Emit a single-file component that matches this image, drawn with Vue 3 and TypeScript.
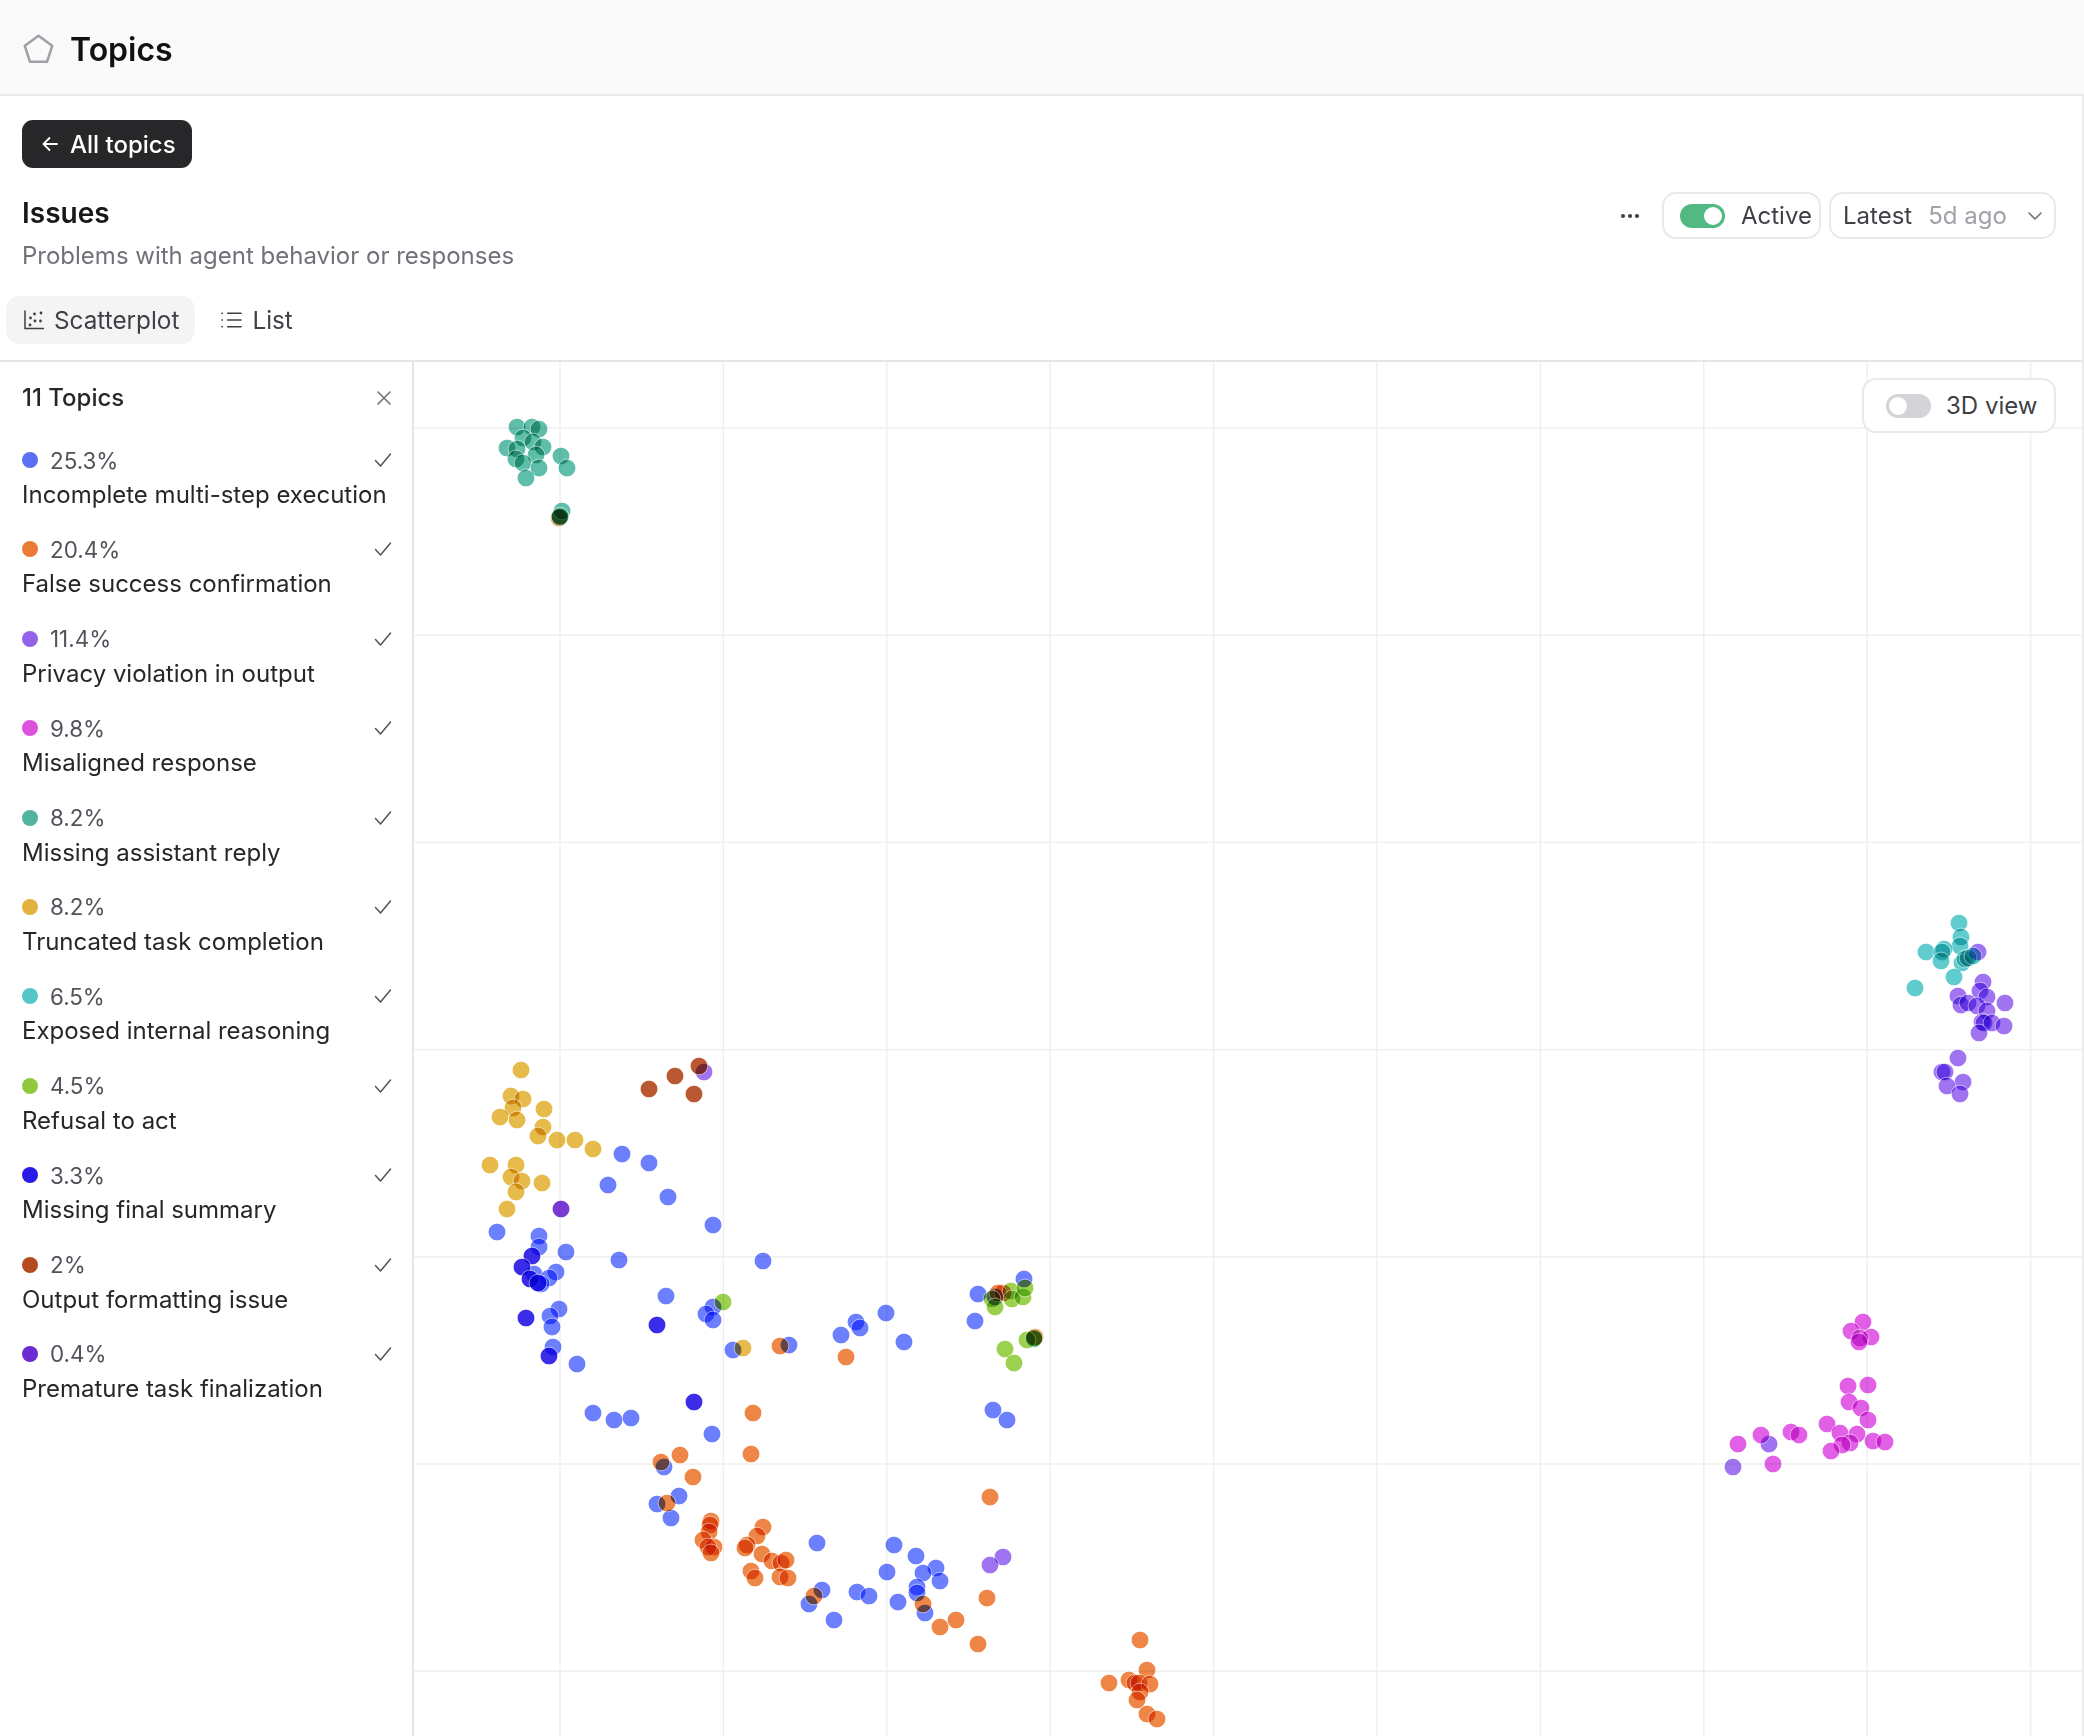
<script setup lang="ts">
type Point = [number, number]

const topics = [
  { pct: '25.3%', name: 'Incomplete multi-step execution', color: '#5a70f2' },
  { pct: '20.4%', name: 'False success confirmation', color: '#ea7a35' },
  { pct: '11.4%', name: 'Privacy violation in output', color: '#9263e8' },
  { pct: '9.8%', name: 'Misaligned response', color: '#dc50e0' },
  { pct: '8.2%', name: 'Missing assistant reply', color: '#52b3a0' },
  { pct: '8.2%', name: 'Truncated task completion', color: '#e2b23e' },
  { pct: '6.5%', name: 'Exposed internal reasoning', color: '#55c5c8' },
  { pct: '4.5%', name: 'Refusal to act', color: '#90c840' },
  { pct: '3.3%', name: 'Missing final summary', color: '#2a1ae6' },
  { pct: '2%', name: 'Output formatting issue', color: '#b44a20' },
  { pct: '0.4%', name: 'Premature task finalization', color: '#6c2bd0' },
]

// page coordinates, the svg viewBox starts at the chart's corner
const series: { color: string; dots: Point[] }[] = [
  {
    color: '#5f74fc',
    dots: [
      [622, 1154], [649, 1163], [608, 1185], [668, 1197], [713, 1225], [497, 1232], [539, 1236], [539, 1247],
      [566, 1252], [619, 1260], [763, 1261], [534, 1274], [556, 1272], [549, 1278], [541, 1284], [559, 1309],
      [550, 1316], [552, 1327], [553, 1347], [577, 1364], [666, 1296], [713, 1307], [706, 1314], [713, 1320],
      [733, 1350], [789, 1345], [841, 1335], [856, 1322], [860, 1328], [886, 1313], [904, 1342], [978, 1294],
      [975, 1321], [995, 1297], [1024, 1279], [993, 1410], [1007, 1420], [593, 1413], [614, 1420], [631, 1418],
      [712, 1434], [664, 1467], [657, 1504], [679, 1496], [671, 1518], [817, 1543], [894, 1545], [916, 1556],
      [936, 1568], [887, 1572], [923, 1573], [940, 1581], [917, 1587], [917, 1593], [898, 1602], [925, 1613],
      [822, 1590], [809, 1604], [857, 1592], [869, 1596], [834, 1620],
    ],
  },
  {
    color: '#ec7c36',
    dots: [
      [780, 1346], [1003, 1293], [998, 1293], [846, 1357], [753, 1413], [751, 1454], [680, 1455], [661, 1462],
      [693, 1477], [990, 1497], [987, 1598], [956, 1620], [940, 1627], [978, 1644], [1140, 1640], [1147, 1670],
      [1109, 1683], [1129, 1680], [1135, 1683], [1139, 1683], [1150, 1684], [1140, 1692], [1137, 1700],
      [1147, 1714], [1157, 1719], [667, 1503], [711, 1521], [710, 1525], [709, 1532],
      [703, 1540], [714, 1547], [708, 1547], [711, 1553], [763, 1527], [757, 1536], [747, 1545],
      [745, 1548], [762, 1554], [772, 1561], [781, 1563], [786, 1560], [751, 1571], [755, 1578], [780, 1577],
      [788, 1578], [814, 1596], [923, 1604], [559, 518], [1035, 1337],
    ],
  },
  {
    color: '#9868f0',
    dots: [
      [704, 1072], [1003, 1557], [990, 1565], [1769, 1444], [1733, 1467], [1978, 952], [1983, 982], [1980, 991],
      [1987, 997], [1958, 996], [1961, 1005], [1968, 1003], [1977, 1006], [1987, 1011], [2005, 1003], [1982, 1022],
      [1984, 1023], [1992, 1023], [2004, 1026], [1979, 1033], [1958, 1058], [1942, 1072], [1945, 1072], [1963, 1082],
      [1947, 1086], [1960, 1094],
    ],
  },
  {
    color: '#de52e3',
    dots: [
      [1863, 1322], [1851, 1331], [1871, 1337], [1860, 1338], [1859, 1342], [1848, 1386], [1868, 1385], [1849, 1402],
      [1861, 1408], [1868, 1420], [1827, 1424], [1840, 1433], [1857, 1434], [1850, 1443], [1842, 1445], [1831, 1451],
      [1873, 1441], [1885, 1442], [1791, 1432], [1799, 1435], [1761, 1435], [1738, 1444], [1773, 1464],
    ],
  },
  {
    color: '#50b9a2',
    dots: [
      [517, 427], [532, 427], [539, 429], [523, 438], [533, 442], [543, 447], [507, 448], [517, 449],
      [536, 455], [516, 459], [523, 463], [539, 468], [526, 478], [561, 456], [567, 468], [562, 511], [560, 516],
      [560, 517], [1034, 1339],
    ],
  },
  {
    color: '#e4b43c',
    dots: [
      [521, 1070], [511, 1096], [523, 1099], [513, 1108], [500, 1117], [517, 1120], [544, 1109], [543, 1127],
      [538, 1136], [557, 1140], [575, 1140], [593, 1149], [490, 1165], [516, 1165], [511, 1177], [522, 1181],
      [542, 1183], [516, 1192], [507, 1209], [743, 1348],
    ],
  },
  {
    color: '#52c8ca',
    dots: [
      [1959, 923], [1961, 937], [1960, 946], [1926, 952], [1944, 949], [1942, 952], [1941, 961], [1962, 963],
      [1965, 959], [1968, 958], [1973, 956], [1954, 977], [1915, 988],
    ],
  },
  {
    color: '#93cd40',
    dots: [
      [723, 1302], [992, 1299], [995, 1307], [1011, 1291], [1012, 1299], [1023, 1297], [1025, 1288], [1027, 1340],
      [1005, 1349], [1014, 1363], [1034, 1338],
    ],
  },
  {
    color: '#2a1ae6',
    dots: [[532, 1256], [522, 1267], [530, 1279], [538, 1283], [526, 1318], [657, 1325], [549, 1356], [694, 1402]],
  },
  { color: '#b44a20', dots: [[649, 1089], [675, 1076], [699, 1066], [694, 1094]] },
  { color: '#6c2bd0', dots: [[561, 1209]] },
]

const gridX = Array.from({ length: 10 }, (_, i) => 560 + i * 163.4)
const gridY = Array.from({ length: 7 }, (_, i) => 428 + i * 207.2)
</script>

<template>
  <div class="page">
    <header class="topbar">
      <svg class="pentagon" viewBox="0 0 31 30" fill="none">
        <path d="M15.5 1.8 29.2 11.8 24 27.8H7L1.8 11.8Z" stroke="#a1a1aa" stroke-width="2.6" stroke-linejoin="round" />
      </svg>
      <h1>Topics</h1>
    </header>

    <div class="content">
      <section class="intro">
        <button class="back">
          <svg viewBox="0 0 20 20" fill="none" stroke="#fff" stroke-width="1.8" stroke-linecap="round" stroke-linejoin="round">
            <path d="M17 10H3.5M9.5 4l-6 6 6 6" />
          </svg>
          All topics
        </button>
        <div class="title-row">
          <div>
            <h2>Issues</h2>
            <p>Problems with agent behavior or responses</p>
          </div>
          <div class="tools">
            <svg class="more" viewBox="0 0 20 6" fill="#3f3f46">
              <circle cx="3" cy="3" r="2.1" />
              <circle cx="10" cy="3" r="2.1" />
              <circle cx="17" cy="3" r="2.1" />
            </svg>
            <div class="pill active-pill">
              <span class="toggle on"><i /></span>
              Active
            </div>
            <div class="pill latest-pill">
              Latest <span class="muted">5d ago</span>
              <svg class="chevron" viewBox="0 0 16 10" fill="none" stroke="#71717a" stroke-width="1.6" stroke-linecap="round" stroke-linejoin="round">
                <path d="M2 2l6 6 6-6" />
              </svg>
            </div>
          </div>
        </div>
        <nav class="tabs">
          <a class="tab current">
            <svg viewBox="0 0 20 20" fill="none" stroke="#3f3f46" stroke-width="1.5" stroke-linecap="round">
              <path d="M1 1v17.5h18.5" />
              <g fill="#3f3f46" stroke="none">
                <circle cx="6" cy="15" r="1.4" /><circle cx="6.5" cy="8" r="1.4" /><circle cx="11" cy="11" r="1.4" />
                <circle cx="17" cy="3" r="1.4" /><circle cx="16.5" cy="11" r="1.4" /><circle cx="10.5" cy="4" r="1.4" />
              </g>
            </svg>
            Scatterplot
          </a>
          <a class="tab">
            <svg viewBox="0 0 22 18" fill="none" stroke="#3f3f46" stroke-width="1.6" stroke-linecap="round">
              <path d="M7 2h14M7 9h14M7 16h14" />
              <path d="M1 2h.5M1 9h.5M1 16h.5" />
            </svg>
            List
          </a>
        </nav>
      </section>

      <div class="body">
        <aside class="side">
          <div class="side-head">
            <span>11 Topics</span>
            <svg viewBox="0 0 16 16" fill="none" stroke="#71717a" stroke-width="1.6" stroke-linecap="round">
              <path d="M2 2l12 12M14 2 2 14" />
            </svg>
          </div>
          <ul>
            <li v-for="t in topics" :key="t.name">
              <div class="pct-row">
                <span class="swatch" :style="{ background: t.color }" />
                <span class="pct">{{ t.pct }}</span>
                <svg class="check" viewBox="0 0 18 16" fill="none" stroke="#52525b" stroke-width="1.5" stroke-linecap="round" stroke-linejoin="round">
                  <path d="M1.5 8.5 6.5 14 16.5 2" />
                </svg>
              </div>
              <div class="name">{{ t.name }}</div>
            </li>
          </ul>
        </aside>

        <main class="chart">
          <svg class="plot" viewBox="414 362 1668 1374">
            <line v-for="x in gridX" :key="x" :x1="x" :x2="x" y1="362" y2="1736" class="grid" />
            <line v-for="y in gridY" :key="y" x1="414" x2="2082" :y1="y" :y2="y" class="grid" />
            <g v-for="s in series" :key="s.color">
              <g v-for="(d, i) in s.dots" :key="i">
                <circle class="dot" :cx="d[0]" :cy="d[1]" r="8.6" :fill="s.color" />
                <circle class="rim" :cx="d[0]" :cy="d[1]" r="8.9" />
              </g>
            </g>
          </svg>
          <div class="pill view-pill">
            <span class="toggle"><i /></span>
            3D view
          </div>
        </main>
      </div>
    </div>
  </div>
</template>

<style>
html,
body {
  margin: 0;
  background: #fff;
}
</style>

<style scoped>
.page {
  width: 2084px;
  height: 1736px;
  overflow: hidden;
  display: flex;
  flex-direction: column;
  font-family: Inter, 'Noto Sans', sans-serif;
  color: #27272a;
}
.topbar {
  flex: none;
  height: 96px;
  box-sizing: border-box;
  display: flex;
  align-items: center;
  gap: 16px;
  padding: 4px 0 0 23px;
  background: #fafafa;
  border-bottom: 2px solid #e9e9eb;
}
.pentagon {
  width: 31px;
  height: 30px;
}
h1 {
  margin: 0;
  font-size: 32px;
  font-weight: 600;
  color: #111;
}
.content {
  flex: 1;
  min-height: 0;
  display: flex;
  flex-direction: column;
  border-right: 2px solid #ececee;
}
.intro {
  flex: none;
  height: 266px;
  box-sizing: border-box;
  padding: 24px 26px 0 22px;
  border-bottom: 2px solid #e6e6e8;
}
.back {
  display: flex;
  align-items: center;
  gap: 10px;
  height: 48px;
  width: 170px;
  padding: 0 0 0 18px;
  border: 0;
  border-radius: 11px;
  background: #27272a;
  color: #fff;
  font: 500 24px Inter, sans-serif;
}
.back svg {
  width: 20px;
  height: 20px;
}
.title-row {
  display: flex;
  justify-content: space-between;
  margin-top: 24px;
}
h2 {
  margin: 1px 0 0;
  font-size: 28px;
  line-height: 40px;
  font-weight: 600;
  color: #18181b;
}
.title-row p {
  margin: 6px 0 0;
  font-size: 24px;
  line-height: 34px;
  color: #71717a;
}
.tools {
  display: flex;
  align-items: flex-start;
  gap: 8px;
}
.more {
  width: 20px;
  height: 6px;
  margin: 21px 14px 0 0;
}
.pill {
  display: flex;
  align-items: center;
  box-sizing: border-box;
  height: 47px;
  border: 2px solid #e9e9eb;
  border-radius: 14px;
  background: #fff;
  font-size: 24px;
  color: #3f3f46;
}
.active-pill {
  width: 159px;
  padding-left: 16px;
  gap: 16px;
}
.latest-pill {
  width: 227px;
  padding-left: 12px;
  gap: 16px;
}
.muted {
  color: #a1a1aa;
}
.chevron {
  width: 16px;
  height: 10px;
  margin-left: 4px;
}
.toggle {
  flex: none;
  display: flex;
  align-items: center;
  width: 45px;
  height: 24px;
  padding: 0 3px;
  box-sizing: border-box;
  border-radius: 12px;
  background: #d4d4d8;
}
.toggle i {
  width: 18px;
  height: 18px;
  border-radius: 50%;
  background: #fff;
}
.toggle.on {
  background: #52b983;
  justify-content: flex-end;
}
.tabs {
  display: flex;
  gap: 8px;
  margin: 23px 0 0 -16px;
}
.tab {
  display: flex;
  align-items: center;
  gap: 10px;
  height: 48px;
  padding: 0 16px 0 18px;
  border-radius: 14px;
  font-size: 24.3px;
  color: #3f3f46;
}
.tab svg {
  width: 20px;
  height: 20px;
}
.tab.current {
  background: #f4f4f5;
}
.tab + .tab svg {
  width: 21px;
  height: 18px;
}
.body {
  flex: 1;
  display: flex;
  min-height: 0;
}
.side {
  flex: none;
  width: 414px;
  box-sizing: border-box;
  border-right: 2px solid #e6e6e8;
  padding: 0 20px 0 22px;
}
.side-head {
  display: flex;
  justify-content: space-between;
  align-items: center;
  padding: 20px 0 29px;
  font-size: 24px;
  line-height: 32px;
  font-weight: 500;
}
.side-head svg {
  width: 16px;
  height: 16px;
}
.side ul {
  margin: 0;
  padding: 0;
  list-style: none;
}
.side li {
  height: 89.4px;
}
.pct-row {
  display: flex;
  align-items: center;
  height: 34px;
  font-size: 22.4px;
  color: #52525b;
}
.swatch {
  width: 16px;
  height: 16px;
  border-radius: 50%;
  margin-right: 12px;
}
.check {
  width: 18px;
  height: 16px;
  margin-left: auto;
}
.name {
  margin-top: 1px;
  font-size: 24px;
  line-height: 34px;
  color: #27272a;
  white-space: nowrap;
}
.chart {
  position: relative;
  flex: 1;
  min-width: 0;
}
.plot {
  display: block;
  width: 100%;
  height: 100%;
}
.grid {
  stroke: #efeff0;
  stroke-width: 1.4;
}
.dot {
  mix-blend-mode: multiply;
  fill-opacity: 0.92;
}
.rim {
  fill: none;
  stroke: #fff;
  stroke-opacity: 0.45;
  stroke-width: 1;
}
.view-pill {
  position: absolute;
  top: 16px;
  right: 26px;
  width: 194px;
  height: 55px;
  padding-left: 22px;
  gap: 15px;
}
</style>
